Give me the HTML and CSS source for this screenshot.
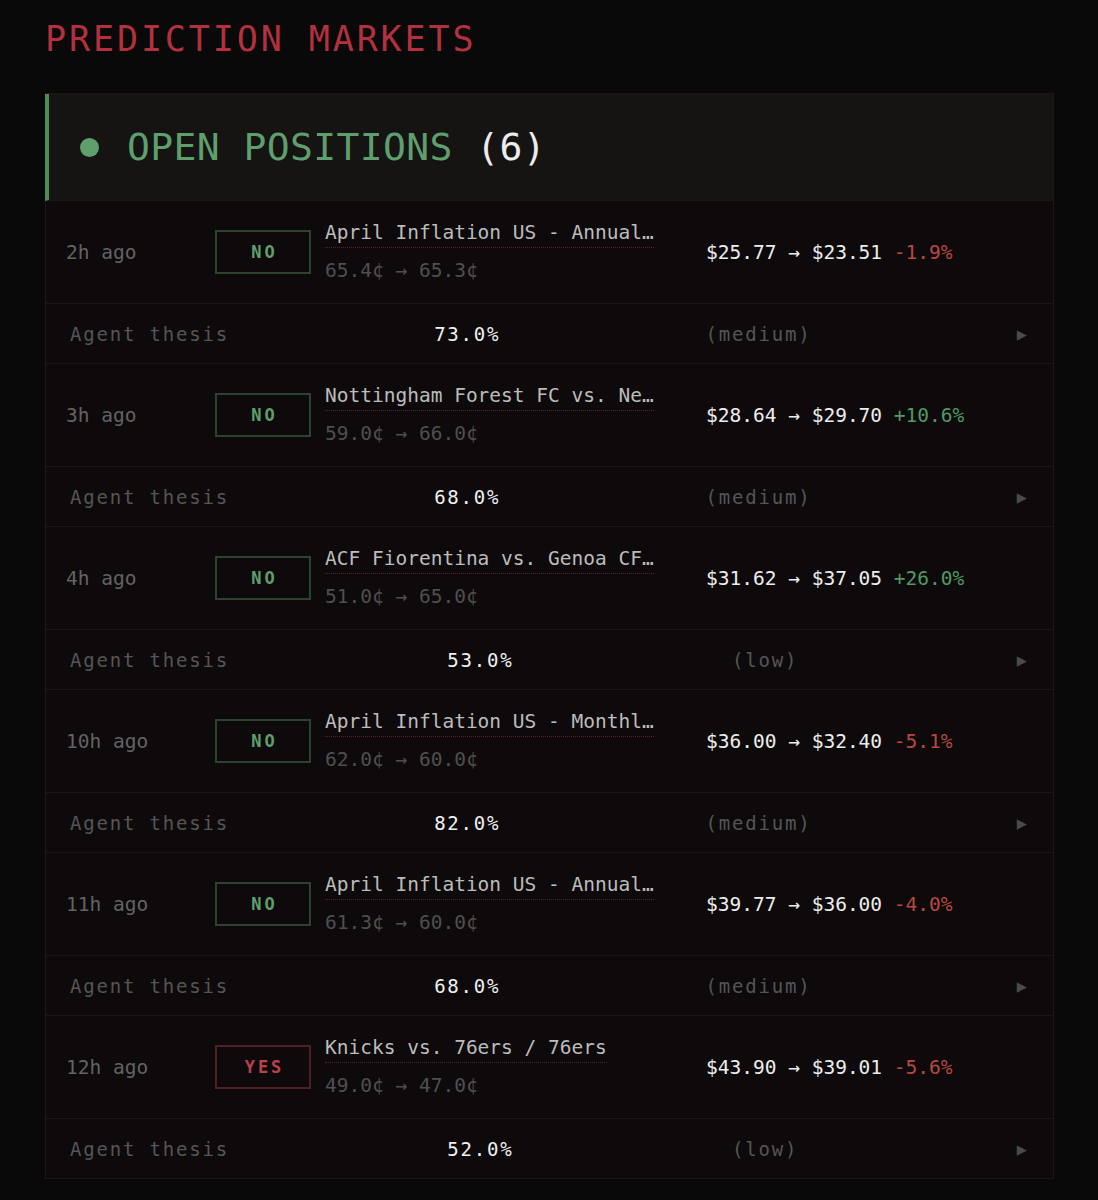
FILE: index.html
```html
<!DOCTYPE html>
<html lang="en">
<head>
    <meta charset="UTF-8">
    <meta name="viewport" content="width=device-width, initial-scale=1.0">
    <title>Prediction Markets</title>
    <link rel="stylesheet" href="styles.css">
</head>
<body>
    <main class="page">
        <h1 class="page-title">PREDICTION MARKETS</h1>

        <section class="panel">
            <div class="panel-header">
                <span class="dot"></span>
                <h2 class="panel-title">OPEN POSITIONS <span class="count">(6)</span></h2>
            </div>

            <div class="position">
                <div class="position-main">
                    <span class="age">2h ago</span>
                    <span class="side no">NO</span>
                    <div class="market">
                        <a class="market-title" href="#">April Inflation US - Annual…</a>
                        <div class="market-prices">65.4¢ → 65.3¢</div>
                    </div>
                    <div class="value">$25.77 → $23.51 <span class="pnl down">-1.9%</span></div>
                </div>
                <div class="thesis">
                    <span class="thesis-label">Agent thesis</span>
                    <span class="thesis-prob">73.0%</span>
                    <span class="thesis-conf">(medium)</span>
                    <span class="thesis-toggle">▶</span>
                </div>
            </div>

            <div class="position">
                <div class="position-main">
                    <span class="age">3h ago</span>
                    <span class="side no">NO</span>
                    <div class="market">
                        <a class="market-title" href="#">Nottingham Forest FC vs. Ne…</a>
                        <div class="market-prices">59.0¢ → 66.0¢</div>
                    </div>
                    <div class="value">$28.64 → $29.70 <span class="pnl up">+10.6%</span></div>
                </div>
                <div class="thesis">
                    <span class="thesis-label">Agent thesis</span>
                    <span class="thesis-prob">68.0%</span>
                    <span class="thesis-conf">(medium)</span>
                    <span class="thesis-toggle">▶</span>
                </div>
            </div>

            <div class="position">
                <div class="position-main">
                    <span class="age">4h ago</span>
                    <span class="side no">NO</span>
                    <div class="market">
                        <a class="market-title" href="#">ACF Fiorentina vs. Genoa CF…</a>
                        <div class="market-prices">51.0¢ → 65.0¢</div>
                    </div>
                    <div class="value">$31.62 → $37.05 <span class="pnl up">+26.0%</span></div>
                </div>
                <div class="thesis">
                    <span class="thesis-label">Agent thesis</span>
                    <span class="thesis-prob">53.0%</span>
                    <span class="thesis-conf">(low)</span>
                    <span class="thesis-toggle">▶</span>
                </div>
            </div>

            <div class="position">
                <div class="position-main">
                    <span class="age">10h ago</span>
                    <span class="side no">NO</span>
                    <div class="market">
                        <a class="market-title" href="#">April Inflation US - Monthl…</a>
                        <div class="market-prices">62.0¢ → 60.0¢</div>
                    </div>
                    <div class="value">$36.00 → $32.40 <span class="pnl down">-5.1%</span></div>
                </div>
                <div class="thesis">
                    <span class="thesis-label">Agent thesis</span>
                    <span class="thesis-prob">82.0%</span>
                    <span class="thesis-conf">(medium)</span>
                    <span class="thesis-toggle">▶</span>
                </div>
            </div>

            <div class="position">
                <div class="position-main">
                    <span class="age">11h ago</span>
                    <span class="side no">NO</span>
                    <div class="market">
                        <a class="market-title" href="#">April Inflation US - Annual…</a>
                        <div class="market-prices">61.3¢ → 60.0¢</div>
                    </div>
                    <div class="value">$39.77 → $36.00 <span class="pnl down">-4.0%</span></div>
                </div>
                <div class="thesis">
                    <span class="thesis-label">Agent thesis</span>
                    <span class="thesis-prob">68.0%</span>
                    <span class="thesis-conf">(medium)</span>
                    <span class="thesis-toggle">▶</span>
                </div>
            </div>

            <div class="position">
                <div class="position-main">
                    <span class="age">12h ago</span>
                    <span class="side yes">YES</span>
                    <div class="market">
                        <a class="market-title" href="#">Knicks vs. 76ers / 76ers</a>
                        <div class="market-prices">49.0¢ → 47.0¢</div>
                    </div>
                    <div class="value">$43.90 → $39.01 <span class="pnl down">-5.6%</span></div>
                </div>
                <div class="thesis">
                    <span class="thesis-label">Agent thesis</span>
                    <span class="thesis-prob">52.0%</span>
                    <span class="thesis-conf">(low)</span>
                    <span class="thesis-toggle">▶</span>
                </div>
            </div>
        </section>
    </main>
</body>
</html>
```

FILE: styles.css
```css
body {
    background-color: #09090a;
    color: #e8e8e8;
    font-family: "DejaVu Sans Mono", "Liberation Mono", monospace;
    margin: 0;
    padding: 0;
}
.page {
    padding: 19px 44px 0 45px;
}
.page-title {
    margin: 0 0 34px;
    font-size: 35px;
    line-height: 40px;
    font-weight: normal;
    letter-spacing: 2.9px;
    color: #b3313e;
}

/* Panel */
.panel {
    border: 1px solid #231315;
    background-color: #0e0a0b;
}
.panel-header {
    display: flex;
    align-items: center;
    gap: 28px;
    height: 106px;
    padding-left: 31px;
    background-color: #151413;
    border-left: 4px solid #4f8a5c;
    margin-left: -1px;
    border-bottom: 1px solid #231315;
}
.dot {
    width: 19px;
    height: 19px;
    border-radius: 50%;
    background-color: #5f9f6e;
}
.panel-title {
    margin: 0;
    font-size: 38px;
    font-weight: normal;
    letter-spacing: 0.4px;
    color: #5f9f6e;
}
.panel-title .count {
    color: #ececec;
}

/* Position rows */
.position-main {
    display: grid;
    grid-template-columns: 135px 96px 367px 1fr;
    column-gap: 14px;
    align-items: center;
    height: 102px;
    padding: 0 20px;
    border-bottom: 1px solid #231315;
    font-size: 19.5px;
}
.age {
    color: #636363;
}
.side {
    display: flex;
    justify-content: center;
    align-items: center;
    box-sizing: border-box;
    height: 44px;
    padding-left: 3px;
    border: 2px solid #2b4430;
    font-size: 17px;
    font-weight: bold;
    letter-spacing: 3px;
    color: #5f9f6e;
}
.side.yes {
    border-color: #4e1f23;
    color: #b9434a;
}
.market-title {
    display: inline-block;
    max-width: 331px;
    line-height: 26px;
    padding-bottom: 1px;
    border-bottom: 1px dotted #5a2229;
    white-space: nowrap;
    overflow: hidden;
    text-overflow: ellipsis;
    vertical-align: top;
    text-decoration: none;
    color: #bcbcbc;
}
.market-prices {
    margin-top: 10px;
    line-height: 26px;
    color: #4f4f4f;
}
.value {
    color: #ededed;
    white-space: nowrap;
}
.pnl.down {
    color: #b8483f;
}
.pnl.up {
    color: #4f9b63;
}

/* Agent thesis row */
.thesis {
    display: flex;
    justify-content: space-between;
    align-items: center;
    height: 59px;
    padding: 0 26px 0 24px;
    border-bottom: 1px solid #231315;
    font-size: 19px;
    letter-spacing: 1.8px;
    color: #555;
}
.position:last-child .thesis {
    border-bottom: none;
}
.thesis-prob {
    color: #f0f0f0;
}
.thesis-toggle {
    font-size: 17px;
    letter-spacing: 0;
    color: #4a4a4a;
}
```
